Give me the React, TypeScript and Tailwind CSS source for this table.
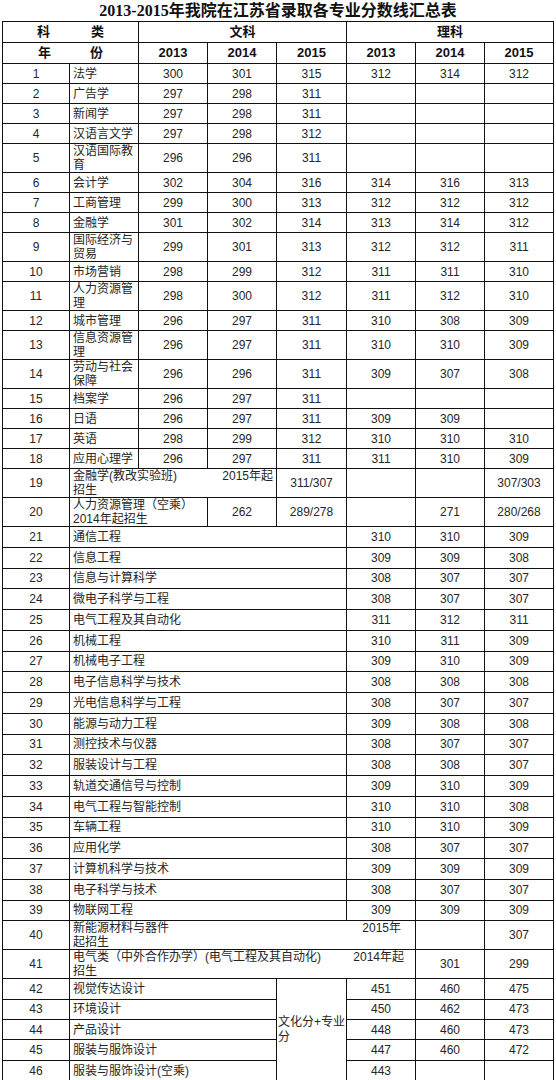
const cell = "border border-[#111] p-0";
const num = `${cell} text-center align-middle`;
const name = `${cell} text-left align-middle pl-[3px] leading-[14px]`;
const head = `${cell} text-center align-middle font-bold text-[13px]`;

// rows 1-18: 序号, 专业, 文科13/14/15, 理科13/14/15
const liberal: string[][] = [
  ["1", "法学", "300", "301", "315", "312", "314", "312"],
  ["2", "广告学", "297", "298", "311", "", "", ""],
  ["3", "新闻学", "297", "298", "311", "", "", ""],
  ["4", "汉语言文学", "297", "298", "312", "", "", ""],
  ["5", "汉语国际教育", "296", "296", "311", "", "", ""],
  ["6", "会计学", "302", "304", "316", "314", "316", "313"],
  ["7", "工商管理", "299", "300", "313", "312", "312", "312"],
  ["8", "金融学", "301", "302", "314", "313", "314", "312"],
  ["9", "国际经济与贸易", "299", "301", "313", "312", "312", "311"],
  ["10", "市场营销", "298", "299", "312", "311", "311", "310"],
  ["11", "人力资源管理", "298", "300", "312", "311", "312", "310"],
  ["12", "城市管理", "296", "297", "311", "310", "308", "309"],
  ["13", "信息资源管理", "296", "297", "311", "310", "310", "309"],
  ["14", "劳动与社会保障", "296", "296", "311", "309", "307", "308"],
  ["15", "档案学", "296", "297", "311", "", "", ""],
  ["16", "日语", "296", "297", "311", "309", "309", ""],
  ["17", "英语", "298", "299", "312", "310", "310", "310"],
  ["18", "应用心理学", "296", "297", "311", "311", "310", "309"],
];

const science: string[][] = [
  ["21", "通信工程", "310", "310", "309"],
  ["22", "信息工程", "309", "309", "308"],
  ["23", "信息与计算科学", "308", "307", "307"],
  ["24", "微电子科学与工程", "308", "307", "307"],
  ["25", "电气工程及其自动化", "311", "312", "311"],
  ["26", "机械工程", "310", "311", "309"],
  ["27", "机械电子工程", "309", "310", "309"],
  ["28", "电子信息科学与技术", "308", "308", "308"],
  ["29", "光电信息科学与工程", "308", "307", "307"],
  ["30", "能源与动力工程", "309", "308", "308"],
  ["31", "测控技术与仪器", "308", "307", "307"],
  ["32", "服装设计与工程", "308", "308", "307"],
  ["33", "轨道交通信号与控制", "309", "310", "309"],
  ["34", "电气工程与智能控制", "310", "310", "308"],
  ["35", "车辆工程", "310", "310", "309"],
  ["36", "应用化学", "308", "307", "307"],
  ["37", "计算机科学与技术", "309", "309", "309"],
  ["38", "电子科学与技术", "308", "307", "307"],
  ["39", "物联网工程", "309", "309", "309"],
];

const art: string[][] = [
  ["42", "视觉传达设计", "451", "460", "475"],
  ["43", "环境设计", "450", "462", "473"],
  ["44", "产品设计", "448", "460", "473"],
  ["45", "服装与服饰设计", "447", "460", "472"],
  ["46", "服装与服饰设计(空乘)", "443", "", ""],
];

const twoLine = ["5", "9", "11", "13", "14"];

export default function App() {
  return (
    <div className="min-h-[1080px] w-[556px] bg-white text-[12px] text-[#262626] font-['Liberation_Sans','Noto_Sans_CJK_SC',sans-serif]">
      <div className="h-[21px] text-center text-[16px] font-bold leading-[21px] text-[#111] font-['Liberation_Serif','Noto_Sans_CJK_SC',serif]">
        2013-2015年我院在江苏省录取各专业分数线汇总表
      </div>
      <table className="ml-[2px] w-[551px] table-fixed border-collapse">
        <colgroup>
          <col className="w-[67px]" />
          <col className="w-[69px]" />
          <col className="w-[69px]" />
          <col className="w-[69px]" />
          <col className="w-[70px]" />
          <col className="w-[69px]" />
          <col className="w-[69px]" />
          <col className="w-[69px]" />
        </colgroup>
        <tbody>
          <tr className="h-[21px] text-[#111]">
            <td colSpan={2} className={head}>
              <div className="flex justify-between px-[34px]">
                <span>科</span>
                <span>类</span>
              </div>
            </td>
            <td colSpan={3} className={head}>文科</td>
            <td colSpan={3} className={head}>理科</td>
          </tr>
          <tr className="h-[21px] text-[#111]">
            <td colSpan={2} className={head}>
              <div className="flex justify-between px-[35px]">
                <span>年</span>
                <span>份</span>
              </div>
            </td>
            <td className={head}>2013</td>
            <td className={head}>2014</td>
            <td className={head}>2015</td>
            <td className={head}>2013</td>
            <td className={head}>2014</td>
            <td className={head}>2015</td>
          </tr>

          {liberal.map((r) => (
            <tr key={r[0]} className={twoLine.includes(r[0]) ? "h-[28.5px]" : "h-[20px]"}>
              <td className={num}>{r[0]}</td>
              <td className={name}>{r[1]}</td>
              {r.slice(2).map((v, i) => (
                <td key={i} className={num}>
                  {v}
                </td>
              ))}
            </tr>
          ))}

          <tr className="h-[29px]">
            <td className={num}>19</td>
            <td colSpan={3} className={name}>
              <div className="flex justify-between pr-[3px]">
                <span>金融学(教改实验班)</span>
                <span>2015年起</span>
              </div>
              <div>招生</div>
            </td>
            <td className={num}>311/307</td>
            <td className={num}></td>
            <td className={num}></td>
            <td className={num}>307/303</td>
          </tr>
          <tr className="h-[29px]">
            <td className={num}>20</td>
            <td colSpan={2} className={name}>
              <div>人力资源管理（空乘）</div>
              <div>2014年起招生</div>
            </td>
            <td className={num}>262</td>
            <td className={num}>289/278</td>
            <td className={num}></td>
            <td className={num}>271</td>
            <td className={num}>280/268</td>
          </tr>

          {science.map((r) => (
            <tr key={r[0]} className="h-[20.75px]">
              <td className={num}>{r[0]}</td>
              <td colSpan={4} className={name}>
                {r[1]}
              </td>
              <td className={num}>{r[2]}</td>
              <td className={num}>{r[3]}</td>
              <td className={num}>{r[4]}</td>
            </tr>
          ))}

          <tr className="h-[29px]">
            <td className={num}>40</td>
            <td colSpan={5} className={name}>
              <div className="flex justify-between pr-[14px]">
                <span>新能源材料与器件</span>
                <span>2015年</span>
              </div>
              <div>起招生</div>
            </td>
            <td className={num}></td>
            <td className={num}>307</td>
          </tr>
          <tr className="h-[29px]">
            <td className={num}>41</td>
            <td colSpan={5} className={name}>
              <div className="flex justify-between pr-[11px]">
                <span>电气类（中外合作办学）(电气工程及其自动化)</span>
                <span>2014年起</span>
              </div>
              <div>招生</div>
            </td>
            <td className={num}>301</td>
            <td className={num}>299</td>
          </tr>

          {art.map((r, i) => (
            <tr key={r[0]} className="h-[20.4px]">
              <td className={num}>{r[0]}</td>
              <td colSpan={3} className={name}>
                {r[1]}
              </td>
              {i === 0 && (
                <td rowSpan={5} className={`${cell} whitespace-nowrap pl-[1px] text-left align-middle leading-[15px]`}>
                  文化分+专业
                  <br />
                  分
                </td>
              )}
              <td className={num}>{r[2]}</td>
              <td className={num}>{r[3]}</td>
              <td className={num}>{r[4]}</td>
            </tr>
          ))}
        </tbody>
      </table>
    </div>
  );
}
